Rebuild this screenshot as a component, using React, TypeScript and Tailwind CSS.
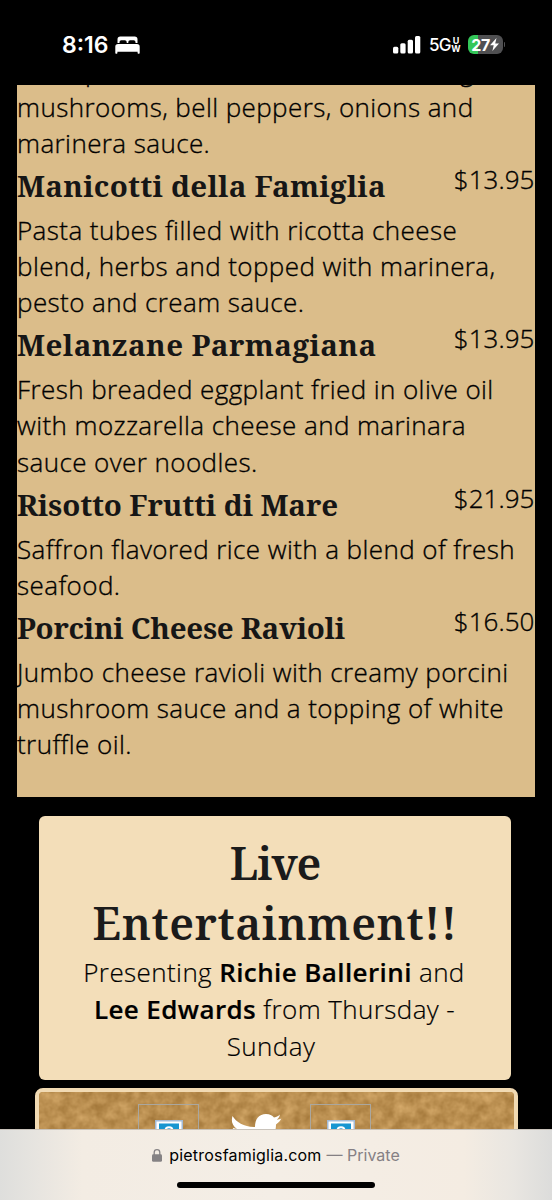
interface Item {
  name: string;
  tracking: string;
  price: string;
  lines: string[];
}

const items: Item[] = [
  {
    name: "Manicotti della Famiglia",
    tracking: "tracking-[0.25px]",
    price: "$13.95",
    lines: ["Pasta tubes filled with ricotta cheese", "blend, herbs and topped with marinera,", "pesto and cream sauce."],
  },
  {
    name: "Melanzane Parmagiana",
    tracking: "tracking-[0.43px]",
    price: "$13.95",
    lines: ["Fresh breaded eggplant fried in olive oil", "with mozzarella cheese and marinara", "sauce over noodles."],
  },
  {
    name: "Risotto Frutti di Mare",
    tracking: "tracking-[-0.14px]",
    price: "$21.95",
    lines: ["Saffron flavored rice with a blend of fresh", "seafood."],
  },
  {
    name: "Porcini Cheese Ravioli",
    tracking: "tracking-[-0.27px]",
    price: "$16.50",
    lines: ["Jumbo cheese ravioli with creamy porcini", "mushroom sauce and a topping of white", "truffle oil."],
  },
];

function Line({ children }: { children: string }) {
  return <div className="h-[36.1px] whitespace-nowrap leading-[36.1px]">{children}</div>;
}

function MenuItem({ item }: { item: Item }) {
  return (
    <section>
      <div className="flex h-[51px] items-start justify-between">
        <h3
          className={`whitespace-nowrap pt-[1px] font-['Noto_Serif',serif] text-[29.5px] font-[680] leading-[47px] text-[#161616] [-webkit-text-stroke:0] ${item.tracking}`}
        >
          {item.name}
        </h3>
        <span className="pr-[0.5px] leading-[37px] tracking-[0.05px]">{item.price}</span>
      </div>
      {item.lines.map((l) => (
        <Line key={l}>{l}</Line>
      ))}
    </section>
  );
}

function StatusBar() {
  return (
    <header className="flex h-[84.5px] shrink-0 items-start pl-[62px] pr-[47px] pt-[34px] font-['Inter',sans-serif] text-white">
      <span className="text-[23px] font-semibold leading-[22px]">8:16</span>
      <svg className="ml-[6px] mt-[2px]" width="25" height="18" viewBox="0 0 25 18" fill="#fff">
        <path d="M2.500 7V3.200A2.800 2.800 0 0 1 5.300 .5h14.400A2.800 2.800 0 0 1 22.500 3.200V7h-2V6a1.800 1.800 0 0 0-1.800-1.700h-3.600A1.800 1.800 0 0 0 13.300 6v1h-1.600V6a1.800 1.800 0 0 0-1.800-1.700H6.300A1.800 1.800 0 0 0 4.500 6v1z" />
        <path d="M.3 17V10.800A2.800 2.800 0 0 1 3.100 8h18.800a2.800 2.800 0 0 1 2.800 2.800V17q0 .7-.7.700h-.700q-.7 0-.7-.7v-1.200H2.400V17q0 .7-.7.700H1q-.7 0-.7-.7z" />
      </svg>
      <div className="ml-auto flex items-start">
        <svg className="mt-[2px]" width="28" height="18" viewBox="0 0 28 18" fill="#fff">
          <rect x="0" y="10.800" width="5.300" height="6.700" rx="1.500" />
          <rect x="7.300" y="7.300" width="5.300" height="10.200" rx="1.500" />
          <rect x="14.700" y="3.800" width="5.300" height="13.700" rx="1.500" />
          <rect x="22" y="0" width="5.300" height="17.500" rx="1.500" />
        </svg>
        <span className="ml-[8px] text-[17px] font-medium leading-[23px] tracking-[-0.9px]">5G</span>
        <span className="ml-[1px] mt-[3px] flex w-[9px] flex-col items-center text-[9px] font-bold leading-[8px]">
          <span>U</span>
          <span>W</span>
        </span>
        <div className="ml-[7px] mt-px flex h-[19px] w-[35px] items-center justify-center rounded-[6px] bg-[linear-gradient(90deg,#34c759_0_9.500px,#505052_9.500px)] text-[16px] font-bold leading-none">
          <span className="tracking-[-0.5px]">27</span>
          <svg width="9" height="13" viewBox="0 0 9 13" fill="#fff">
            <path d="M6.500 0 0 7.300h3.700L2.400 13 9 5.400H5.200z" />
          </svg>
        </div>
        <span className="ml-[1px] mt-[8px] h-[5px] w-[1.500px] rounded-r bg-[#505052]" />
      </div>
    </header>
  );
}

function SocialImage() {
  return (
    <div className="flex h-[61px] w-[61px] justify-center border border-[#aaa79f] pt-[15.5px]">
      <svg width="28" height="28" viewBox="0 0 28 28">
        <rect width="28" height="28" fill="#a3bbd7" />
        <rect x="1.500" y="1.500" width="25" height="25" fill="#fff" />
        <rect x="4" y="3.500" width="20" height="20" fill="#1796d1" />
        <path d="M10.500 10.500c0-4.500 7-4.500 7 0 0 3-3.500 2.500-3.500 6" fill="none" stroke="#fff" strokeWidth="2" />
      </svg>
    </div>
  );
}

function SocialCard() {
  return (
    <div className="relative ml-[34.5px] mt-[8.5px] h-[120px] w-[483px] shrink-0 overflow-hidden rounded-[8px] border-4 border-[#f1dab3] bg-[#b98d4d]">
      <svg className="absolute inset-0" width="475" height="112">
        <filter id="grain" x="0" y="0" width="100%" height="100%" colorInterpolationFilters="sRGB">
          <feTurbulence type="fractalNoise" baseFrequency="0.09" numOctaves="3" seed="8" />
          <feColorMatrix values="0.26 0 0 0 0.60  0.26 0 0 0 0.43  0.25 0 0 0 0.19  0 0 0 0 1" />
        </filter>
        <rect width="475" height="112" filter="url(#grain)" />
      </svg>
      <div className="relative flex items-start pl-[99.5px] pt-[11.5px]">
        <SocialImage />
        <svg className="ml-[32px] mt-[9px]" width="52" height="43" viewBox="0 0 52 43" fill="#fff">
          <path d="M1.500 3C5 9 14 14.500 24 14c0-8 4-13 11-13 4 0 6 1.500 8 3.500 3-.7 4.500-1.700 6-3-.8 3-1.700 4-3.200 5.200 2 0 3-.5 4.500-1.200-1.200 2.500-2.700 4-5.300 6C45 29 29 47 2 38c6 0 10-1 14-4-5-1-8-3-9-8h4C5 24 2 20 2 15l4 1C1 12 0 8 1.500 3z" />
        </svg>
        <div className="ml-[27px]">
          <SocialImage />
        </div>
      </div>
    </div>
  );
}

function AddressBar() {
  return (
    <footer className="absolute bottom-0 left-0 flex h-[71.5px] w-full flex-col items-center border-t border-[#c9c3bb] bg-[linear-gradient(90deg,#dededc_0%,#e5e3df_5%,#f3ece3_15%,#f4eee6_50%,#f4ece2_84%,#e9e6e1_93%,#dcdcdb_100%)] font-['Inter',sans-serif]">
      <div className="flex h-[52.500px] items-center pb-px text-[16px] text-black">
        <svg className="mr-[7px]" width="10" height="13" viewBox="0 0 10 13">
          <rect y="5.300" width="10" height="7.500" rx="1.400" fill="#858284" />
          <path d="M2.200 6V3.500a2.800 2.800 0 0 1 5.600 0V6" fill="none" stroke="#858284" strokeWidth="1.300" />
        </svg>
        <span className="tracking-[0.2px]">pietrosfamiglia.com</span>
        <span className="ml-[5px] text-[#858084]">— Private</span>
      </div>
      <div className="h-[6px] w-[198px] rounded-full bg-black" />
    </footer>
  );
}

export default function App() {
  return (
    <div className="relative flex h-[1200px] w-[552px] flex-col overflow-hidden bg-black">
      <StatusBar />
      <main className="ml-[17px] h-[712.5px] w-[518px] shrink-0 overflow-hidden bg-[#dbbd8a] font-['Open_Sans',sans-serif] text-[26px] font-light tracking-[0.41px] text-black [-webkit-text-stroke:0.35px_black]">
        <div className="-mt-[31.7px] flex h-[36.1px] justify-between pl-[68px] pr-[61px] leading-[36.1px]">
          <span>p</span>
          <span>g</span>
        </div>
        <Line>mushrooms, bell peppers, onions and</Line>
        <Line>marinera sauce.</Line>
        {items.map((item) => (
          <MenuItem key={item.name} item={item} />
        ))}
      </main>
      <section className="ml-[39px] mt-[18.5px] h-[264px] w-[472px] shrink-0 rounded-[6px] bg-[#f3deb9] pt-[17px] text-center">
        <h2 className="font-['Noto_Serif',serif] text-[44.5px] font-[620] leading-[60.5px] text-[#1b1b1b]">
          <span className="tracking-[-1.2px]">Live</span>
          <br />
          <span className="tracking-[0.55px]">Entertainment!!</span>
        </h2>
        <p className="font-['Open_Sans',sans-serif] text-[26px] font-light leading-[37.3px] tracking-[0.4px] text-black [-webkit-text-stroke:0.2px_black]">
          <span className="pr-[2px]">
            Presenting <b className="font-[650]">Richie Ballerini</b> and
          </span>
          <br />
          <span className="pr-[1px]">
            <b className="font-[650]">Lee Edwards</b> from Thursday -
          </span>
          <br />
          <span className="pr-[8px]">Sunday</span>
        </p>
      </section>
      <SocialCard />
      <AddressBar />
    </div>
  );
}
